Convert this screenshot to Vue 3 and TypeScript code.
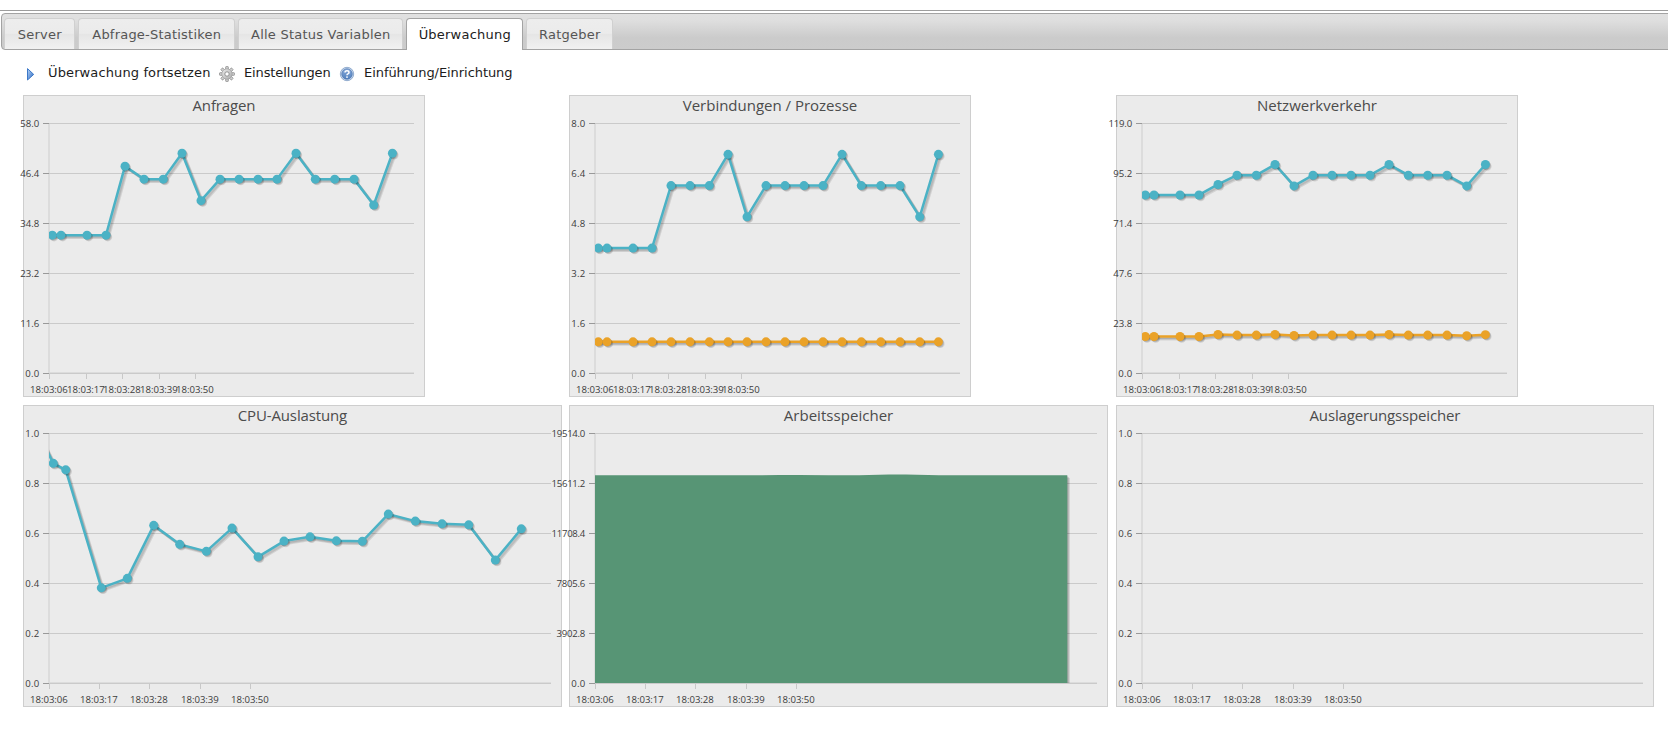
<script setup lang="ts">
interface Series {
  color: string
  values: number[]
}
interface Chart {
  id: string
  title: string
  titleWidth: number
  width: number
  yTicks: string[]
  max: number
  xTicks: number[]
  xs: number[]
  series: Series[]
  area?: string
}

const tabs = [
  { label: 'Server', active: false, width: 71 },
  { label: 'Abfrage-Statistiken', active: false, width: 157 },
  { label: 'Alle Status Variablen', active: false, width: 165 },
  { label: 'Überwachung', active: true, width: 117 },
  { label: 'Ratgeber', active: false, width: 87 },
]

const times = ['18:03:06', '18:03:17', '18:03:28', '18:03:39', '18:03:50']
const smallXTicks = [26.5, 63.5, 99.5, 136.5, 172.5]
const wideXTicks = [26.5, 76.5, 126.5, 177.5, 227.5]
const smallXs = [29.3, 38, 64, 83, 102, 121, 140.3, 159, 178, 197, 216, 235, 254, 273, 292.3, 311.7, 331, 350.7, 369.4]
const cpuXs = [16, 30.3, 42.7, 78.3, 104.3, 130.7, 156.7, 183.3, 209, 235, 261, 287, 313.3, 339.3, 365.3, 392.3, 419, 445.7, 472.3, 498.3]
const unitTicks = ['1.0', '0.8', '0.6', '0.4', '0.2', '0.0']
const blue = '#4bb2c5'
const orange = '#eaa228'

const charts: Chart[] = [
  {
    id: 'queries', title: 'Anfragen', titleWidth: 63, width: 402, max: 58,
    yTicks: ['58.0', '46.4', '34.8', '23.2', '11.6', '0.0'], xTicks: smallXTicks, xs: smallXs,
    series: [{ color: blue, values: [32, 32, 32, 32, 48, 45, 45, 51, 40, 45, 45, 45, 45, 51, 45, 45, 45, 39, 51] }],
  },
  {
    id: 'connections', title: 'Verbindungen / Prozesse', titleWidth: 174.5, width: 402, max: 8,
    yTicks: ['8.0', '6.4', '4.8', '3.2', '1.6', '0.0'], xTicks: smallXTicks, xs: smallXs,
    series: [
      { color: blue, values: [4, 4, 4, 4, 6, 6, 6, 7, 5, 6, 6, 6, 6, 7, 6, 6, 6, 5, 7] },
      { color: orange, values: smallXs.map(() => 1) },
    ],
  },
  {
    id: 'traffic', title: 'Netzwerkverkehr', titleWidth: 120, width: 402, max: 119,
    yTicks: ['119.0', '95.2', '71.4', '47.6', '23.8', '0.0'], xTicks: smallXTicks, xs: smallXs,
    series: [
      { color: blue, values: [84.8, 84.8, 84.8, 84.8, 89.8, 94.2, 94.2, 99.3, 89.1, 94.2, 94.2, 94.2, 94.2, 99.3, 94.2, 94.2, 94.2, 89.1, 99.3] },
      { color: orange, values: [17.4, 17.4, 17.4, 17.4, 18.4, 18.1, 18.1, 18.4, 17.9, 18.1, 18.1, 18.1, 18.1, 18.4, 18.1, 18.1, 18.1, 17.8, 18.3] },
    ],
  },
  {
    id: 'cpu', title: 'CPU-Auslastung', titleWidth: 109.5, width: 539, max: 1,
    yTicks: unitTicks, xTicks: wideXTicks, xs: cpuXs,
    series: [{ color: blue, values: [0.995, 0.879, 0.853, 0.381, 0.419, 0.631, 0.555, 0.527, 0.62, 0.505, 0.568, 0.585, 0.569, 0.567, 0.676, 0.648, 0.637, 0.633, 0.492, 0.617] }],
  },
  {
    id: 'memory', title: 'Arbeitsspeicher', titleWidth: 109.5, width: 539, max: 19514,
    yTicks: ['19514.0', '15611.2', '11708.4', '7805.6', '3902.8', '0.0'], xTicks: wideXTicks, xs: [],
    series: [], area: 'M26 278V70.3H180L210 70H230L260 70.3H290L320 69.6H337L370 70.3H498.3V278Z',
  },
  {
    id: 'swap', title: 'Auslagerungsspeicher', titleWidth: 151, width: 538, max: 1,
    yTicks: unitTicks, xTicks: wideXTicks, xs: [], series: [],
  },
]

const yOf = (c: Chart, v: number) => 278.1 - (v / c.max) * 250
const linePoints = (c: Chart, s: Series) => s.values.map((v, i) => `${c.xs[i]},${yOf(c, v).toFixed(2)}`).join(' ')
const labelWidth = (t: string) => [...t].reduce((w, ch) => w + (/\d/.test(ch) ? 4.9 : 4.2), 0)
const shadowSteps = [2.6, 1.8, 0.9]
</script>

<template>
  <div class="page">
    <div class="rule"></div>
    <ul class="tabs">
      <li v-for="t in tabs" :key="t.label" class="tab" :class="{ active: t.active }" :style="{ width: t.width + 'px' }">{{ t.label }}</li>
    </ul>

    <div class="toolbar">
      <a class="tool resume">
        <svg class="icon" width="16" height="16" viewBox="0 0 16 16">
          <defs>
            <linearGradient id="playFill" x1="0" y1="0" x2="1" y2="1">
              <stop offset="0" stop-color="#b5d4f8" />
              <stop offset="1" stop-color="#2c68c0" />
            </linearGradient>
          </defs>
          <path d="M4.5 2.6L10.7 8.4L4.5 14Z" fill="url(#playFill)" stroke="#3c78c8" stroke-width="1" stroke-linejoin="round" />
        </svg>
        <span>Überwachung fortsetzen</span>
      </a>
      <a class="tool settings">
        <svg class="icon" width="16" height="16" viewBox="0 0 16 16">
          <defs>
            <linearGradient id="gearFill" x1="0" y1="0" x2="1" y2="1">
              <stop offset="0" stop-color="#eaeaea" />
              <stop offset="1" stop-color="#acacac" />
            </linearGradient>
          </defs>
          <g fill="#d0d0d0" stroke="#8c8c8c" stroke-width=".8">
            <rect v-for="n in 8" :key="n" x="6.7" y=".5" width="2.6" height="3.6" rx=".6" :transform="`rotate(${n * 45} 8 8)`" />
          </g>
          <circle cx="8" cy="8" r="5.2" fill="url(#gearFill)" stroke="#989898" stroke-width=".6" />
          <circle cx="8" cy="8" r="2.2" fill="#fff" stroke="#8a8a8a" stroke-width=".9" />
        </svg>
        <span>Einstellungen</span>
      </a>
      <a class="tool intro">
        <svg class="icon" width="16" height="16" viewBox="0 0 16 16">
          <defs>
            <linearGradient id="helpFill" x1="0" y1="0" x2="0" y2="1">
              <stop offset="0" stop-color="#86a9da" />
              <stop offset="1" stop-color="#5080bd" />
            </linearGradient>
          </defs>
          <circle cx="8" cy="8" r="6.7" fill="#cfdff2" stroke="#6f8fbc" stroke-width=".7" />
          <circle cx="8" cy="8" r="5.3" fill="url(#helpFill)" stroke="#466fa8" stroke-width=".6" />
          <path d="M6 6.6Q6 4.7 8 4.7T10 6.4Q10 7.3 8.9 7.9Q8 8.3 8 9.3" fill="none" stroke="#fff" stroke-width="1.5" />
          <circle cx="8" cy="11.1" r=".9" fill="#fff" />
        </svg>
        <span>Einführung/Einrichtung</span>
      </a>
    </div>

    <div class="charts">
      <div v-for="c in charts" :key="c.id" class="panel" :style="{ width: c.width + 'px' }">
        <svg class="plot" :width="c.width" height="302">
          <defs>
            <clipPath :id="'clip-' + c.id">
              <rect x="26" y="20" :width="c.width - 37" height="258" />
            </clipPath>
          </defs>
          <g shape-rendering="crispEdges">
            <rect x="25" y="28" width="2" height="250" fill="#dcdcdc" />
            <rect x="26" y="277" :width="c.width - 37" height="1" fill="#dcdcdc" />
            <template v-for="(t, i) in c.yTicks" :key="t">
              <rect x="26" :y="28 + i * 50" :width="c.width - 37" height="1" fill="#cacaca" />
              <rect x="20" :y="28 + i * 50" width="6" height="1" fill="#999" />
            </template>
            <rect v-for="x in c.xTicks" :key="x" :x="x - 0.5" y="279" width="1" height="5" fill="#c8c8c8" />
          </g>
          <g :clip-path="`url(#clip-${c.id})`">
            <template v-if="c.area">
              <path v-for="d in shadowSteps" :key="d" :d="c.area" :transform="`translate(${d} ${d})`" class="area-shadow" />
              <path :d="c.area" fill="#579575" />
            </template>
            <template v-for="s in c.series" :key="s.color">
              <polyline v-for="d in shadowSteps" :key="d" :points="linePoints(c, s)" :transform="`translate(${d} ${d})`" class="line-shadow" />
              <polyline :points="linePoints(c, s)" class="line" :stroke="s.color" />
              <g v-for="(v, i) in s.values" :key="i">
                <circle v-for="d in shadowSteps" :key="d" :cx="c.xs[i] + d * 0.7" :cy="yOf(c, v) + d * 0.7" r="4.4" class="dot-shadow" />
                <circle :cx="c.xs[i]" :cy="yOf(c, v)" r="4.5" :fill="s.color" />
              </g>
            </template>
          </g>
          <text class="title" :x="c.width / 2 - c.titleWidth / 2" y="16" :textLength="c.titleWidth">{{ c.title }}</text>
          <text v-for="(t, i) in c.yTicks" :key="t" class="tick" :x="16.2 - labelWidth(t)" :y="32 + i * 50" :textLength="labelWidth(t)">{{ t }}</text>
          <text v-for="(t, i) in times" :key="t" class="tick" :x="c.xTicks[i] - 0.6 - labelWidth(t) / 2" y="298" :textLength="labelWidth(t)">{{ t }}</text>
        </svg>
      </div>
    </div>
  </div>
</template>

<style>
html,
body {
  background: #fff;
  overflow: hidden;
}
</style>

<style scoped>
.page {
  height: 729px;
  box-sizing: border-box;
  padding-top: 10px;
  font-family: "DejaVu Sans", Verdana, sans-serif;
  font-size: 13px;
  overflow: hidden;
}
.rule {
  height: 1px;
  background: #9d9d9d;
}
.tabs {
  display: flex;
  align-items: flex-end;
  gap: 3px;
  list-style: none;
  box-sizing: border-box;
  height: 37px;
  margin: 2px -10px 0 1px;
  padding: 0 0 0 2px;
  border: 1px solid #a3a3a3;
  border-radius: 4px;
  background: linear-gradient(#e1e1e1 0%, #dedede 20%, #cbcbcb 68%, #cccccc 100%);
}
.tab {
  box-sizing: border-box;
  height: 31px;
  border: 1px solid #d0d0d0;
  border-bottom: 0;
  border-radius: 4px 4px 0 0;
  background: linear-gradient(#ededed 0%, #ebebeb 48%, #e5e5e5 50%, #f1f1f1 100%);
  color: #555;
  line-height: 31px;
  text-align: center;
  letter-spacing: 0.22px;
  text-indent: 0.5px;
  white-space: nowrap;
}
.tab.active {
  height: 32px;
  margin-bottom: -1px;
  border-color: #a3a3a3;
  background: #fff;
  color: #212121;
}
.toolbar {
  display: flex;
  height: 45px;
  padding-left: 23px;
  color: #1c1c1c;
  line-height: 45px;
}
.tool {
  display: flex;
  white-space: nowrap;
}
.tool .icon {
  flex: none;
  margin-top: 16px;
}
.tool span {
  margin-left: 9px;
}
.resume {
  width: 196px;
  letter-spacing: 0.12px;
}
.settings {
  width: 120px;
  letter-spacing: -0.12px;
}
.intro {
  letter-spacing: -0.06px;
}
.charts {
  display: grid;
  grid-template-columns: 546px 547px 540px;
  grid-auto-rows: 302px;
  row-gap: 8px;
  padding-left: 23px;
}
.panel {
  height: 302px;
  box-sizing: border-box;
  background: #ebebeb;
  box-shadow: inset 0 0 0 1px #cecece;
}
.plot {
  display: block;
  overflow: visible;
}
.title {
  font-family: "Open Sans", "Noto Sans", sans-serif;
  font-size: 15px;
  fill: #4c4c4c;
}
.tick {
  font-family: "Open Sans", "Noto Sans", sans-serif;
  font-size: 9.6px;
  fill: #3c3c3c;
}
.line {
  fill: none;
  stroke-width: 2.5;
  stroke-linejoin: round;
}
.line-shadow {
  fill: none;
  stroke: rgba(0, 0, 0, 0.1);
  stroke-width: 2.5;
  stroke-linejoin: round;
}
.dot-shadow,
.area-shadow {
  fill: rgba(0, 0, 0, 0.1);
}
</style>
